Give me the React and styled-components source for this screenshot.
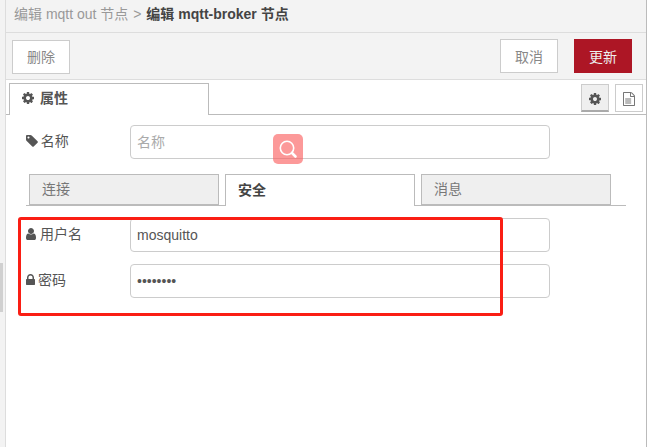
import React from "react";
import styled, { createGlobalStyle } from "styled-components";

const Global = createGlobalStyle`
  html, body { margin: 0; padding: 0; background: #fff; }
  * { box-sizing: border-box; }
  body { font-family: "Liberation Sans", "Noto Sans CJK SC", sans-serif; font-size: 14px; color: #555; }
`;

const PATHS = {
  cog: "M1152 896q0-106-75-181t-181-75-181 75-75 181 75 181 181 75 181-75 75-181zm512-109v222q0 12-8 23t-20 13l-185 28q-19 54-39 91 35 50 107 138 10 12 10 25t-9 23q-27 37-99 108t-94 71q-12 0-26-9l-138-108q-44 23-91 38-16 136-29 186-7 28-36 28h-222q-14 0-24.5-8.5t-11.5-21.5l-28-184q-49-16-90-37l-141 107q-10 9-25 9-14 0-25-11-126-114-165-168-7-10-7-23 0-12 8-23 15-21 51-66.5t54-70.5q-27-50-41-99l-183-27q-13-2-21-12.5t-8-23.5v-222q0-12 8-23t19-13l186-28q14-46 39-92-40-57-107-138-10-12-10-24 0-10 9-23 26-36 98.5-107.5t94.5-71.5q13 0 26 10l138 107q44-23 91-38 16-136 29-186 7-28 36-28h222q14 0 24.5 8.5t11.5 21.5l28 184q49 16 90 37l142-107q9-9 24-9 13 0 25 10 129 119 165 170 7 8 7 22 0 12-8 23-15 21-51 66.5t-54 70.5q26 50 41 98l183 28q13 2 21 12.5t8 23.5z",
  tag: "M576 448q0-53-37.5-90.5t-90.5-37.5-90.5 37.5-37.5 90.5 37.5 90.5 90.5 37.5 90.5-37.5 37.5-90.5zm1067 576q0 53-37 90l-491 492q-39 37-91 37-53 0-90-37l-715-716q-38-37-64.5-101t-26.5-117v-416q0-52 38-90t90-38h416q53 0 117 26.5t102 64.5l715 714q37 39 37 91z",
  user: "M1536 1399q0 109-62.5 187t-150.5 78h-854q-88 0-150.5-78t-62.5-187q0-85 8.5-160.5t31.5-152 58.5-131 94-89 134.5-34.5q131 128 313 128t313-128q76 0 134.5 34.5t94 89 58.5 131 31.5 152 8.5 160.5zm-256-887q0 159-112.5 271.5t-271.5 112.5-271.5-112.5-112.5-271.5 112.5-271.5 271.5-112.5 271.5 112.5 112.5 271.5z",
  lock: "M640 768h512v-192q0-106-75-181t-181-75-181 75-75 181v192zm832 96v576q0 40-28 68t-68 28h-960q-40 0-68-28t-28-68v-576q0-40 28-68t68-28h32v-192q0-184 132-316t316-132 316 132 132 316v192h32q40 0 68 28t28 68z",
  file: "M1596 380q28 28 48 76t20 88v1152q0 40-28 68t-68 28h-1344q-40 0-68-28t-28-68v-1600q0-40 28-68t68-28h896q40 0 88 20t76 48zm-444-244v376h376q-10-29-22-41l-313-313q-12-12-41-22zm384 1528v-1024h-416q-40 0-68-28t-28-68v-416h-768v1536h1280zm-1128-800q0-14 9-23t23-9h704q14 0 23 9t9 23v64q0 14-9 23t-23 9h-704q-14 0-23-9t-9-23v-64zm736 224q14 0 23 9t9 23v64q0 14-9 23t-23 9h-704q-14 0-23-9t-9-23v-64q0-14 9-23t23-9h704zm0 256q14 0 23 9t9 23v64q0 14-9 23t-23 9h-704q-14 0-23-9t-9-23v-64q0-14 9-23t23-9h704z",
};
const BOX = {
  cog: [128, 1536],
  tag: [128, 1515],
  user: [256, 1408],
  lock: [320, 1152],
  file: [128, 1536],
};
const IconSvg = styled.svg`
  flex: none;
  margin-top: 2px;
`;
const Fa = ({ name }) => {
  const [x, w] = BOX[name];
  return (
    <IconSvg width={(w / 1792) * 14} height={14} viewBox={`${x} 0 ${w} 1792`} fill="currentColor">
      <path d={PATHS[name]} />
    </IconSvg>
  );
};

const Page = styled.div`
  position: relative;
  width: 648px;
  height: 447px;
  overflow: hidden;
  display: flex;
  background: #fff;
`;
const Gutter = styled.div`
  width: 6px;
  flex: none;
  background: #f3f3f3;
  border-right: 1px solid #ddd;
  padding-top: 263px;
`;
const Grip = styled.div`
  width: 3px;
  height: 49px;
  background: #d0d0d0;
`;
const Tray = styled.div`
  width: 641px;
  flex: none;
  border-right: 1px solid #bbb;
  display: flex;
  flex-direction: column;
`;
const Title = styled.div`
  height: 33px;
  background: #f3f3f3;
  border-bottom: 1px solid #ddd;
  padding: 6px 0 0 8px;
  line-height: 16px;
  font-size: 14px;
  color: #999;
  white-space: nowrap;
`;
const Sep = styled.span`
  margin: 0 1px;
`;
const Crumb = styled.b`
  color: #444;
  font-weight: 700;
`;
const Toolbar = styled.div`
  height: 47px;
  background: #f3f3f3;
  border-bottom: 1px solid #ddd;
  display: flex;
  align-items: flex-start;
  padding: 6px 14px 0 6px;
`;
const Btn = styled.div`
  width: 58px;
  height: 34px;
  display: flex;
  align-items: center;
  justify-content: center;
  font-size: 14px;
  background: ${p => (p.$primary ? "#ad1625" : "#fff")};
  color: ${p => (p.$primary ? "#eee" : "#888")};
  border: 1px solid ${p => (p.$primary ? "#ad1625" : "#ccc")};
  margin-top: ${p => (p.$low ? "1px" : "0")};
  padding-bottom: ${p => (p.$low ? "2px" : "0")};
  margin-left: ${p => p.$gap || 0}px;
`;
const Spacer = styled.div`
  flex: 1;
`;
const TabBar = styled.div`
  height: 35px;
  border-bottom: 1px solid #bbb;
  display: flex;
  align-items: flex-start;
  padding: 3px 3px 0 3px;
`;
const MainTab = styled.div`
  width: 200px;
  height: 32px;
  background: #fff;
  border: 1px solid #bbb;
  border-bottom: none;
  display: flex;
  align-items: center;
  gap: 6px;
  padding: 0 0 6px 12px;
  font-weight: 700;
  color: #555;
  font-size: 14px;
`;
const IconBtn = styled.div`
  width: 28px;
  height: 28px;
  margin-top: 1px;
  margin-left: ${p => p.$gap || 0}px;
  display: flex;
  align-items: center;
  justify-content: center;
  color: ${p => (p.$active ? "#555" : "#777")};
  background: ${p => (p.$active ? "#efefef" : "#fff")};
  border: 1px solid #ccc;
  border-bottom: ${p => (p.$active ? "2px solid #aaa" : "1px solid #ccc")};
`;
const Body = styled.div`
  flex: 1;
  padding: 10px 0 0 20px;
  display: flex;
  flex-direction: column;
`;
const Row = styled.div`
  display: flex;
  align-items: flex-start;
  height: 34px;
  margin-bottom: ${p => p.$mb || 0}px;
`;
const Label = styled.div`
  width: 104px;
  height: 100%;
  flex: none;
  display: flex;
  align-items: center;
  gap: 3px;
  padding-bottom: 4px;
  font-size: 14px;
  color: #555;
`;
const Input = styled.input`
  width: 420px;
  height: 34px;
  padding: 0 6px;
  border: 1px solid #ccc;
  border-radius: 4px;
  background: #fff;
  outline: none;
  font: 14px "Liberation Sans", "Noto Sans CJK SC", sans-serif;
  color: #555;
  &::placeholder { color: #aaa; opacity: 1; }
`;
const SubTabs = styled.div`
  margin: 15px 0 12px;
  width: 600px;
  height: 32px;
  border-bottom: 1px solid #bbb;
  display: flex;
  gap: 6px;
  padding-left: 3px;
`;
const SubTab = styled.div`
  width: 190px;
  height: ${p => (p.$active ? "32px" : "31px")};
  padding: 0 0 3px 12px;
  display: flex;
  align-items: center;
  font-size: 14px;
  border: 1px solid #bbb;
  border-bottom: ${p => (p.$active ? "none" : "1px solid #bbb")};
  background: ${p => (p.$active ? "#fff" : "#efefef")};
  color: ${p => (p.$active ? "#444" : "#777")};
  font-weight: ${p => (p.$active ? 700 : 400)};
`;
const Highlight = styled.div`
  position: absolute;
  left: 18px;
  top: 217px;
  width: 485px;
  height: 99px;
  border: 3px solid #fa1e14;
  border-radius: 3px;
  pointer-events: none;
`;
const SearchBadge = styled.div`
  position: absolute;
  left: 273px;
  top: 134px;
  width: 30px;
  height: 30px;
  border-radius: 5px;
  background: rgba(250, 90, 90, 0.62);
  display: flex;
  align-items: center;
  justify-content: center;
`;

export default function App() {
  return (
    <Page>
      <Global />
      <Gutter><Grip /></Gutter>
      <Tray>
        <Title>
          编辑 mqtt out 节点 <Sep>&gt;</Sep> <Crumb>编辑 mqtt-broker 节点</Crumb>
        </Title>
        <Toolbar>
          <Btn $low>删除</Btn>
          <Spacer />
          <Btn>取消</Btn>
          <Btn $primary $gap={16}>更新</Btn>
        </Toolbar>
        <TabBar>
          <MainTab><Fa name="cog" />属性</MainTab>
          <Spacer />
          <IconBtn $active><Fa name="cog" /></IconBtn>
          <IconBtn $gap={6}><Fa name="file" /></IconBtn>
        </TabBar>
        <Body>
          <Row>
            <Label><Fa name="tag" />名称</Label>
            <Input placeholder="名称" readOnly />
          </Row>
          <SubTabs>
            <SubTab>连接</SubTab>
            <SubTab $active>安全</SubTab>
            <SubTab>消息</SubTab>
          </SubTabs>
          <Row $mb={12}>
            <Label><Fa name="user" />用户名</Label>
            <Input defaultValue="mosquitto" readOnly />
          </Row>
          <Row>
            <Label><Fa name="lock" />密码</Label>
            <Input type="password" defaultValue="password" readOnly />
          </Row>
        </Body>
      </Tray>
      <SearchBadge>
        <svg width="22" height="22" viewBox="0 0 22 22" fill="none" stroke="#fff">
          <circle cx="10" cy="10" r="6.7" strokeWidth="1.6" />
          <path d="M15 15l3.5 3.5" strokeWidth="2.6" strokeLinecap="round" />
        </svg>
      </SearchBadge>
      <Highlight />
    </Page>
  );
}
